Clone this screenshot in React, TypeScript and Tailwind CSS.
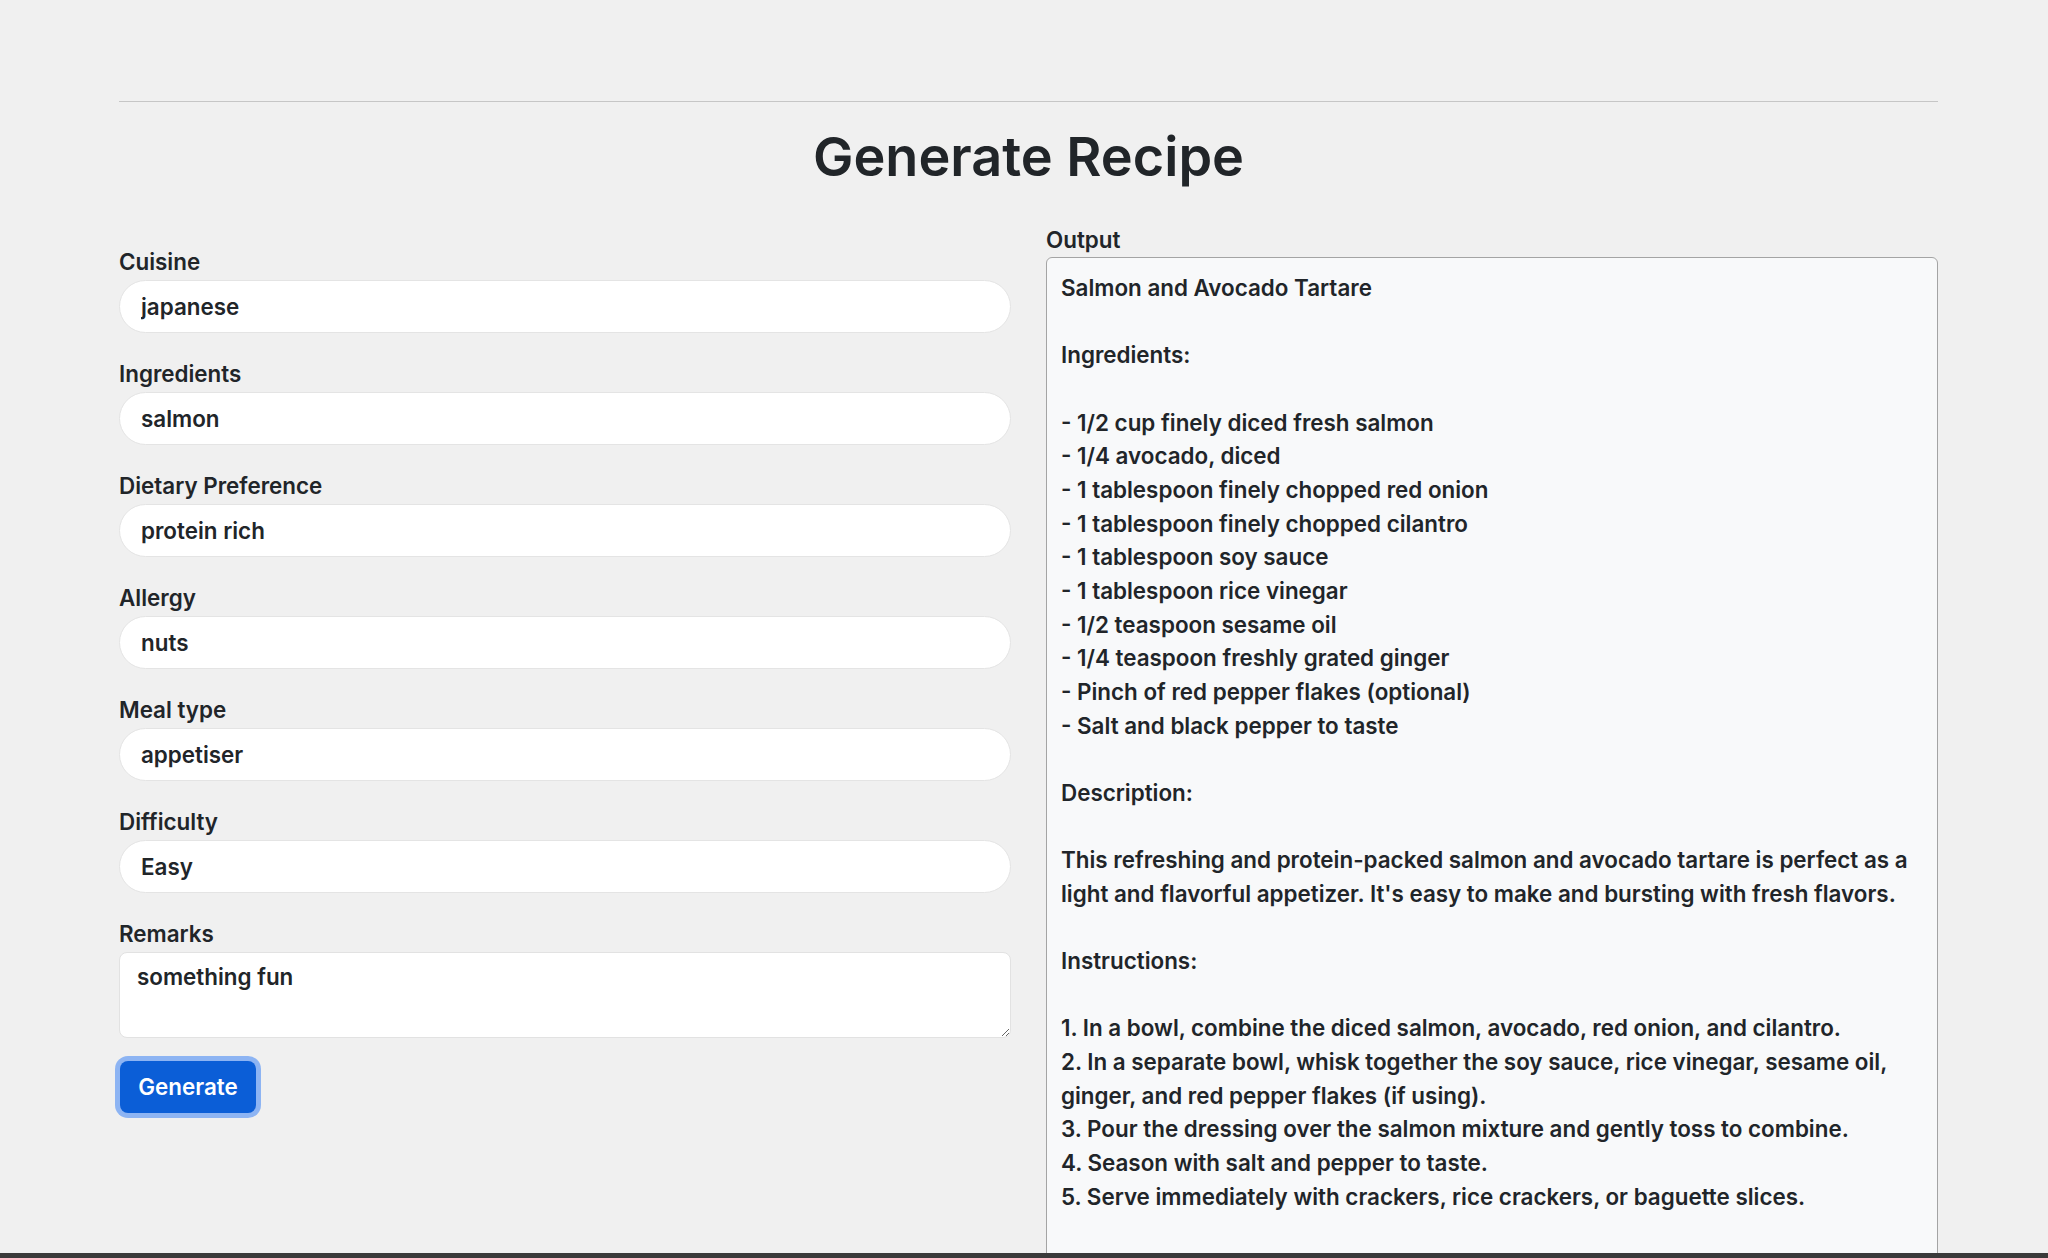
import React from "react";

const fields = [
  { label: "Cuisine", value: "japanese" },
  { label: "Ingredients", value: "salmon" },
  { label: "Dietary Preference", value: "protein rich" },
  { label: "Allergy", value: "nuts" },
  { label: "Meal type", value: "appetiser" },
  { label: "Difficulty", value: "Easy" },
];

const outputLines = [
  "Salmon and Avocado Tartare",
  "",
  "Ingredients:",
  "",
  "- 1/2 cup finely diced fresh salmon",
  "- 1/4 avocado, diced",
  "- 1 tablespoon finely chopped red onion",
  "- 1 tablespoon finely chopped cilantro",
  "- 1 tablespoon soy sauce",
  "- 1 tablespoon rice vinegar",
  "- 1/2 teaspoon sesame oil",
  "- 1/4 teaspoon freshly grated ginger",
  "- Pinch of red pepper flakes (optional)",
  "- Salt and black pepper to taste",
  "",
  "Description:",
  "",
  "This refreshing and protein-packed salmon and avocado tartare is perfect as a",
  "light and flavorful appetizer. It's easy to make and bursting with fresh flavors.",
  "",
  "Instructions:",
  "",
  "1. In a bowl, combine the diced salmon, avocado, red onion, and cilantro.",
  "2. In a separate bowl, whisk together the soy sauce, rice vinegar, sesame oil,",
  "ginger, and red pepper flakes (if using).",
  "3. Pour the dressing over the salmon mixture and gently toss to combine.",
  "4. Season with salt and pepper to taste.",
  "5. Serve immediately with crackers, rice crackers, or baguette slices.",
  "",
  "",
];

const App = () => {
  return (
    <div className="flex h-screen flex-col bg-[#f0f0f0] font-['Inter',sans-serif] text-[#212529]">
      <div className="flex-1 overflow-hidden">
        <div className="ml-[119px] w-[1819px] pt-[101px]">
          <hr className="border-t border-[#c6c6c6]" />

          <h1 className="mt-[22px] text-center text-[54px] font-semibold leading-[66px]">
            Generate Recipe
          </h1>

          <div className="mt-[35px] grid grid-cols-2 gap-[35px]">
            {/* form */}
            <div className="pt-[22px]">
              {fields.map((field) => (
                <div key={field.label} className="mb-[26px]">
                  <label className="mb-[3px] block text-[22.4px] font-semibold leading-[30px]">
                    {field.label}
                  </label>
                  <input
                    readOnly
                    value={field.value}
                    className="block h-[53px] w-full rounded-full border border-[#e4e4e4] bg-white px-[21px] text-[22.4px] font-semibold text-[#212529] outline-none"
                  />
                </div>
              ))}

              <div className="mb-[23px]">
                <label className="mb-[3px] block text-[22.4px] font-semibold leading-[30px]">
                  Remarks
                </label>
                <textarea
                  readOnly
                  defaultValue="something fun"
                  className="block h-[86px] w-full resize-y rounded-lg border border-[#e2e2e2] bg-white px-[17px] py-[9px] text-[22.4px] font-semibold leading-[30px] text-[#212529] outline-none"
                />
              </div>

              <button className="ml-[1px] h-[52px] w-[136px] rounded-lg bg-[#0b5ed7] text-[22.4px] font-semibold text-white ring-[5px] ring-[#8db4f3]">
                Generate
              </button>
            </div>

            {/* output */}
            <div>
              <label className="mb-[2px] block text-[22.4px] font-semibold leading-[30px]">
                Output
              </label>
              <div className="h-[1100px] rounded-md border border-[#a4a4a4] bg-[#f8f9fa] px-[14px] pt-[13px] text-[22.4px] font-semibold leading-[33.67px]">
                {outputLines.map((line, i) => (
                  <div key={i} className="h-[33.67px] whitespace-nowrap">
                    {line}
                  </div>
                ))}
              </div>
            </div>
          </div>
        </div>
      </div>
      <div className="h-[5px] bg-[#3a3a3a]" />
    </div>
  );
};

export default App;
